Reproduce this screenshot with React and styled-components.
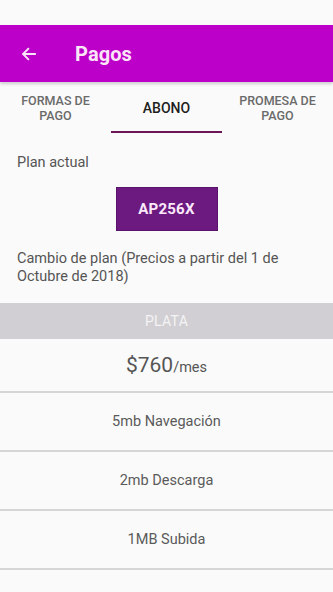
import React from "react";
import styled, { createGlobalStyle } from "styled-components";

const Global = createGlobalStyle`
  html, body { margin: 0; padding: 0; background: #fafafa; }
  body { font-family: Roboto, "Noto Sans", sans-serif; }
  * { box-sizing: border-box; }
`;

const Screen = styled.div`
  width: 333px;
  height: 592px;
  overflow: hidden;
  background: #fafafa;
  display: flex;
  flex-direction: column;
  & > * { flex-shrink: 0; }
`;

const StatusBar = styled.div`
  height: 25px;
  background: #fafafa;
`;

const AppBar = styled.header`
  height: 57px;
  background: #bd00c9;
  display: flex;
  align-items: center;
  padding-left: 20px;
  box-shadow: 0 2px 3px rgba(0, 0, 0, 0.18);
  position: relative;
  z-index: 1;
`;

const BackButton = styled.span`
  width: 18px;
  height: 18px;
  display: flex;
  align-items: center;
  justify-content: center;
  margin-right: 37px;
`;

const Title = styled.h1`
  margin: 0;
  font-size: 20px;
  font-weight: 700;
  color: #fbe6f8;
  letter-spacing: 0.1px;
`;

const Tabs = styled.nav`
  height: 51px;
  display: grid;
  grid-template-columns: 111px 111px 111px;
`;

const Tab = styled.div`
  display: flex;
  align-items: center;
  justify-content: center;
  text-align: center;
  font-size: ${(p) => (p.$active ? "14px" : "12.5px")};
  font-weight: 500;
  line-height: 15px;
  text-transform: uppercase;
  color: ${(p) => (p.$active ? "#1e1e1e" : "#6a6a6a")};
  border-bottom: 2px solid ${(p) => (p.$active ? "#6b1456" : "transparent")};
  padding-top: 3px;
`;

const Content = styled.section`
  padding: 21px 17px 0;
  display: flex;
  flex-direction: column;
`;

const Label = styled.p`
  margin: 0;
  font-size: 14.5px;
  line-height: 18px;
  color: #555;
`;

const PlanButton = styled.button`
  align-self: center;
  margin-top: 15px;
  width: 102px;
  height: 44px;
  border: 1px solid #5a136b;
  background: #6c1a80;
  color: #fbe9fb;
  font-family: Roboto, sans-serif;
  font-weight: 700;
  font-size: 15px;
  letter-spacing: 0.2px;
`;

const Note = styled(Label)`
  margin-top: 19px;
  line-height: 18px;
`;

const PlanHeader = styled.div`
  margin-top: 17px;
  height: 36px;
  background: #d1cfd3;
  color: #f4f3f5;
  font-size: 14px;
  display: flex;
  align-items: center;
  justify-content: center;
  letter-spacing: 0.3px;
`;

const Row = styled.div`
  height: ${(p) => p.$h}px;
  display: flex;
  align-items: center;
  justify-content: center;
  border-bottom: 2px solid #d6d6d6;
  color: #5a5a5a;
  font-size: 14.5px;
`;

const Price = styled.span`
  font-size: 21px;
  color: #555;
`;

const Unit = styled.span`
  font-size: 14.5px;
  color: #555;
  margin-top: 4px;
`;

const Arrow = () => (
  <svg width="18" height="18" viewBox="0 0 24 24" fill="none">
    <path
      d="M20 12H4.5M11 5l-7 7 7 7"
      stroke="#fbe6f8"
      strokeWidth="2.4"
      strokeLinecap="square"
    />
  </svg>
);

const features = ["5mb Navegación", "2mb Descarga", "1MB Subida", ""];

export default function App() {
  return (
    <Screen>
      <Global />
      <StatusBar />
      <AppBar>
        <BackButton>
          <Arrow />
        </BackButton>
        <Title>Pagos</Title>
      </AppBar>
      <Tabs>
        <Tab>
          Formas de
          <br />
          pago
        </Tab>
        <Tab $active>Abono</Tab>
        <Tab>
          Promesa de
          <br />
          pago
        </Tab>
      </Tabs>
      <Content>
        <Label>Plan actual</Label>
        <PlanButton>AP256X</PlanButton>
        <Note>Cambio de plan (Precios a partir del 1 de Octubre de 2018)</Note>
      </Content>
      <PlanHeader>PLATA</PlanHeader>
      <Row $h={54}>
        <Price>$760</Price>
        <Unit>/mes</Unit>
      </Row>
      {features.map((f, i) => (
        <Row key={i} $h={59}>
          {f}
        </Row>
      ))}
    </Screen>
  );
}
